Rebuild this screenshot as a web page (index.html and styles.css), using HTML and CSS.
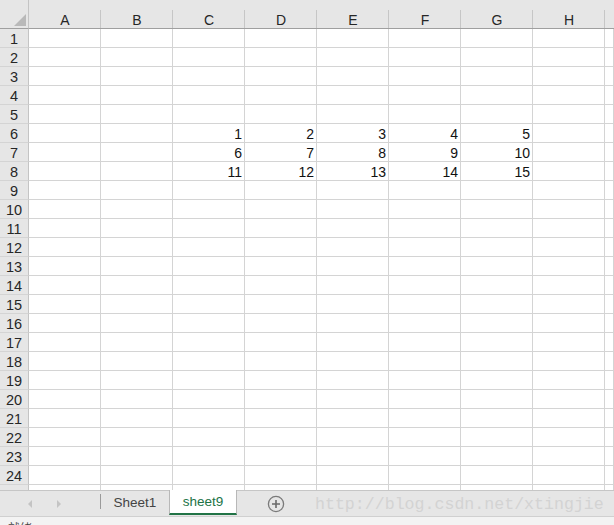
FILE: index.html
```html
<!DOCTYPE html>
<html>
<head>
<meta charset="utf-8">
<link rel="stylesheet" href="styles.css">
</head>
<body>
<div class="app">
  <div class="sheet">
    <div class="corner"><span class="tri"></span></div>
    <div class="ch">A</div><div class="ch">B</div><div class="ch">C</div><div class="ch">D</div><div class="ch">E</div><div class="ch">F</div><div class="ch">G</div><div class="ch">H</div><div class="ch end"></div>

    <div class="rh">1</div><div class="c"></div><div class="c"></div><div class="c"></div><div class="c"></div><div class="c"></div><div class="c"></div><div class="c"></div><div class="c"></div><div class="c"></div>
    <div class="rh">2</div><div class="c"></div><div class="c"></div><div class="c"></div><div class="c"></div><div class="c"></div><div class="c"></div><div class="c"></div><div class="c"></div><div class="c"></div>
    <div class="rh">3</div><div class="c"></div><div class="c"></div><div class="c"></div><div class="c"></div><div class="c"></div><div class="c"></div><div class="c"></div><div class="c"></div><div class="c"></div>
    <div class="rh">4</div><div class="c"></div><div class="c"></div><div class="c"></div><div class="c"></div><div class="c"></div><div class="c"></div><div class="c"></div><div class="c"></div><div class="c"></div>
    <div class="rh">5</div><div class="c"></div><div class="c"></div><div class="c"></div><div class="c"></div><div class="c"></div><div class="c"></div><div class="c"></div><div class="c"></div><div class="c"></div>
    <div class="rh">6</div><div class="c"></div><div class="c"></div><div class="c n">1</div><div class="c n">2</div><div class="c n">3</div><div class="c n">4</div><div class="c n">5</div><div class="c"></div><div class="c"></div>
    <div class="rh">7</div><div class="c"></div><div class="c"></div><div class="c n">6</div><div class="c n">7</div><div class="c n">8</div><div class="c n">9</div><div class="c n">10</div><div class="c"></div><div class="c"></div>
    <div class="rh">8</div><div class="c"></div><div class="c"></div><div class="c n">11</div><div class="c n">12</div><div class="c n">13</div><div class="c n">14</div><div class="c n">15</div><div class="c"></div><div class="c"></div>
    <div class="rh">9</div><div class="c"></div><div class="c"></div><div class="c"></div><div class="c"></div><div class="c"></div><div class="c"></div><div class="c"></div><div class="c"></div><div class="c"></div>
    <div class="rh">10</div><div class="c"></div><div class="c"></div><div class="c"></div><div class="c"></div><div class="c"></div><div class="c"></div><div class="c"></div><div class="c"></div><div class="c"></div>
    <div class="rh">11</div><div class="c"></div><div class="c"></div><div class="c"></div><div class="c"></div><div class="c"></div><div class="c"></div><div class="c"></div><div class="c"></div><div class="c"></div>
    <div class="rh">12</div><div class="c"></div><div class="c"></div><div class="c"></div><div class="c"></div><div class="c"></div><div class="c"></div><div class="c"></div><div class="c"></div><div class="c"></div>
    <div class="rh">13</div><div class="c"></div><div class="c"></div><div class="c"></div><div class="c"></div><div class="c"></div><div class="c"></div><div class="c"></div><div class="c"></div><div class="c"></div>
    <div class="rh">14</div><div class="c"></div><div class="c"></div><div class="c"></div><div class="c"></div><div class="c"></div><div class="c"></div><div class="c"></div><div class="c"></div><div class="c"></div>
    <div class="rh">15</div><div class="c"></div><div class="c"></div><div class="c"></div><div class="c"></div><div class="c"></div><div class="c"></div><div class="c"></div><div class="c"></div><div class="c"></div>
    <div class="rh">16</div><div class="c"></div><div class="c"></div><div class="c"></div><div class="c"></div><div class="c"></div><div class="c"></div><div class="c"></div><div class="c"></div><div class="c"></div>
    <div class="rh">17</div><div class="c"></div><div class="c"></div><div class="c"></div><div class="c"></div><div class="c"></div><div class="c"></div><div class="c"></div><div class="c"></div><div class="c"></div>
    <div class="rh">18</div><div class="c"></div><div class="c"></div><div class="c"></div><div class="c"></div><div class="c"></div><div class="c"></div><div class="c"></div><div class="c"></div><div class="c"></div>
    <div class="rh">19</div><div class="c"></div><div class="c"></div><div class="c"></div><div class="c"></div><div class="c"></div><div class="c"></div><div class="c"></div><div class="c"></div><div class="c"></div>
    <div class="rh">20</div><div class="c"></div><div class="c"></div><div class="c"></div><div class="c"></div><div class="c"></div><div class="c"></div><div class="c"></div><div class="c"></div><div class="c"></div>
    <div class="rh">21</div><div class="c"></div><div class="c"></div><div class="c"></div><div class="c"></div><div class="c"></div><div class="c"></div><div class="c"></div><div class="c"></div><div class="c"></div>
    <div class="rh">22</div><div class="c"></div><div class="c"></div><div class="c"></div><div class="c"></div><div class="c"></div><div class="c"></div><div class="c"></div><div class="c"></div><div class="c"></div>
    <div class="rh">23</div><div class="c"></div><div class="c"></div><div class="c"></div><div class="c"></div><div class="c"></div><div class="c"></div><div class="c"></div><div class="c"></div><div class="c"></div>
    <div class="rh">24</div><div class="c"></div><div class="c"></div><div class="c"></div><div class="c"></div><div class="c"></div><div class="c"></div><div class="c"></div><div class="c"></div><div class="c"></div>
    <div class="rh last"></div><div class="c last"></div><div class="c last"></div><div class="c last"></div><div class="c last"></div><div class="c last"></div><div class="c last"></div><div class="c last"></div><div class="c last"></div><div class="c last"></div>
  </div>

  <div class="tabbar">
    <div class="nav">
      <svg class="arrow" width="6" height="10" viewBox="0 0 6 10"><path d="M5 1 L1 5 L5 9 Z" fill="#c4c4c4"/></svg>
      <svg class="arrow" width="6" height="10" viewBox="0 0 6 10"><path d="M1 1 L5 5 L1 9 Z" fill="#c4c4c4"/></svg>
    </div>
    <div class="sep"></div>
    <div class="tab">Sheet1</div>
    <div class="tab active">sheet9</div>
    <div class="add">
      <svg width="18" height="18" viewBox="0 0 18 18"><circle cx="9" cy="9" r="7.6" fill="none" stroke="#7a7a7a" stroke-width="1.3"/><path d="M9 5 V13 M5 9 H13" stroke="#6a6a6a" stroke-width="1.6"/></svg>
    </div>
    <div class="watermark">http://blog.csdn.net/xtingjie</div>
  </div>
  <div class="status">就绪</div>
</div>
</body>
</html>
```
FILE: styles.css
```css
* { box-sizing: border-box; }
html, body { margin: 0; padding: 0; background: #fff; }
body {
  width: 614px;
  height: 525px;
  overflow: hidden;
  font-family: "Liberation Sans", "Noto Sans CJK SC", sans-serif;
}
.app { display: flex; flex-direction: column; height: 525px; }

.sheet {
  display: grid;
  grid-template-columns: 29px repeat(8, 72px) 1fr;
  grid-template-rows: 29px repeat(24, 19px) 1fr;
  height: 490px;
  flex: none;
}
.corner {
  background: #e6e6e6;
  border-right: 1px solid #c4c4c4;
  border-bottom: 1px solid #9f9f9f;
  display: flex;
  align-items: flex-end;
  justify-content: flex-end;
  padding: 0 2px 2px 0;
}
.tri {
  width: 12px;
  height: 12px;
  background: #b9b9b9;
  clip-path: polygon(100% 0, 100% 100%, 0 100%);
}
.ch {
  background: #e6e6e6 linear-gradient(#c6c6c6, #c6c6c6) right bottom / 1px 18px no-repeat;
  border-bottom: 1px solid #9f9f9f;
  text-align: center;
  font-size: 14px;
  color: #262626;
  padding-top: 12px;
  line-height: 16px;
}
.ch.end { background: #e6e6e6; }
.rh {
  background: #e6e6e6;
  border-right: 1px solid #c4c4c4;
  border-bottom: 1px solid #d4d4d4;
  text-align: center;
  font-size: 14.5px;
  line-height: 18px;
  padding-top: 1px;
  color: #262626;
}
.c {
  border-right: 1px solid #d4d4d4;
  border-bottom: 1px solid #d4d4d4;
  font-size: 14px;
  line-height: 18px;
  padding-top: 1px;
  color: #111;
}
.n { text-align: right; padding-right: 2px; }
.last { border-bottom: none; }

.tabbar {
  height: 27px;
  flex: none;
  display: flex;
  align-items: stretch;
  background: #e6e6e6;
  border-top: 1px solid #c6c6c6;
  border-bottom: 1px solid #d0d0d0;
}
.nav {
  width: 100px;
  display: flex;
  align-items: center;
  gap: 23px;
  padding-left: 27px;
}
.sep {
  width: 1px;
  background: #9a9a9a;
  margin: 3px 0 7px;
}
.tab {
  width: 68px;
  text-align: center;
  font-size: 13.5px;
  line-height: 24px;
  color: #444;
}
.tab.active {
  background: #fff;
  color: #217346;
  width: 68px;
  margin-top: -1px;
  height: 25px;
  border-left: 1px solid #b8b8b8;
  border-right: 1px solid #b8b8b8;
  border-bottom: 2px solid #217346;
  line-height: 23px;
}
.add {
  width: 78px;
  display: flex;
  align-items: center;
  justify-content: center;
  padding-top: 1px;
}
.watermark {
  font-family: "Liberation Mono", monospace;
  font-size: 16.6px;
  line-height: 26px;
  color: #d3d3d3;
  white-space: nowrap;
  padding-top: 1px;
}
.status {
  flex: 1;
  background: #f3f3f3;
  font-size: 12px;
  color: #444;
  padding: 4px 0 0 8px;
  line-height: 14px;
  font-family: "Noto Sans CJK SC", sans-serif;
}
```
